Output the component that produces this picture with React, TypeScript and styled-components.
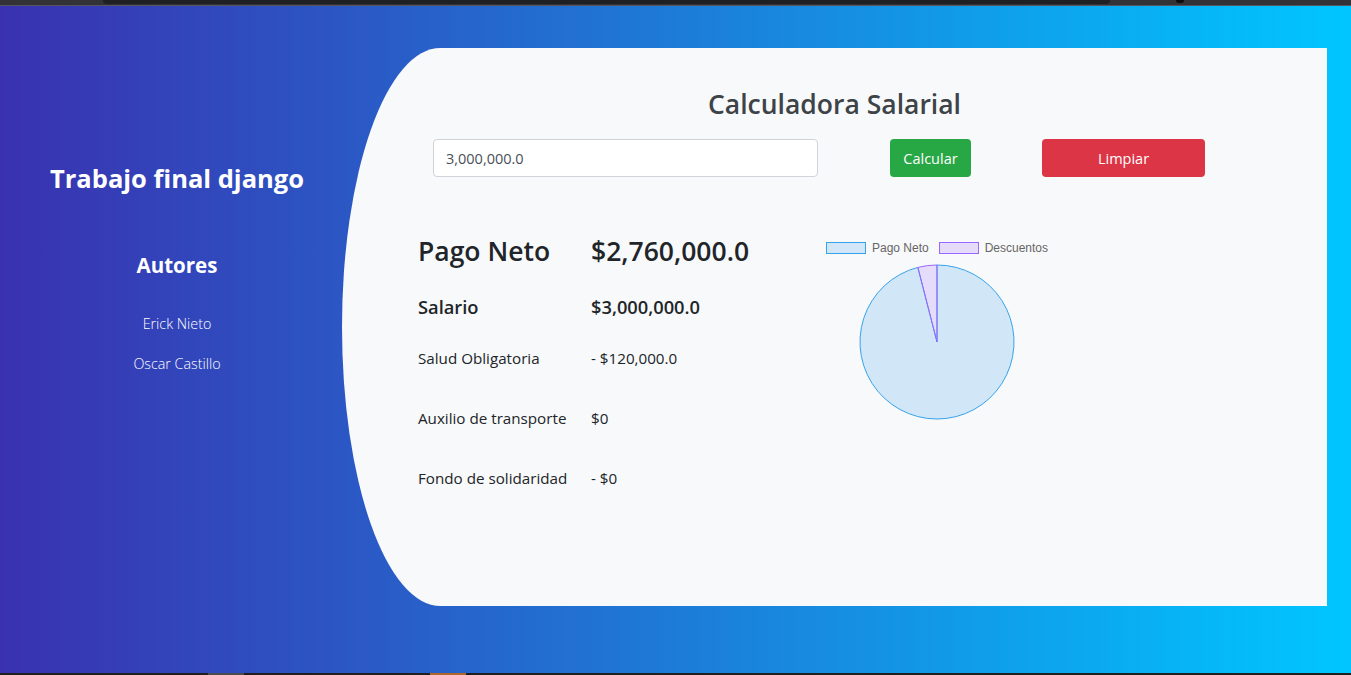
import React from "react";
import styled, { createGlobalStyle } from "styled-components";

// salary data shown in the calculator
interface deduction {
    label: string,
    value: string,
};

const salary = 3000000;
const descuentos = 120000;
const pagoNeto = salary - descuentos;

const deductions: deduction[] = [
    { label: "Salud Obligatoria", value: "- $120,000.0" },
    { label: "Auxilio de transporte", value: "$0" },
    { label: "Fondo de solidaridad", value: "- $0" },
];

const GlobalStyle = createGlobalStyle`
body {
    margin: 0;
    font-family: "Segoe UI", "Open Sans", sans-serif;
    overflow: hidden;
}
`

const Page = styled.div`
display: flex;
flex-direction: column;
width: 1351px;
height: 675px;
`

const TopStrip = styled.div`
height: 6px;
flex-shrink: 0;
display: flex;
align-items: flex-start;
padding-left: 103px;
background: #333337;
border-bottom: 1px solid #56565a;
box-sizing: border-box;
`

const TopTab = styled.div`
width: 1007px;
height: 4px;
background: #1f2023;
border-radius: 0 0 4px 4px;
`

const TopDot = styled.div`
width: 8px;
height: 3px;
margin-left: 66px;
background: #0c0c0d;
border-radius: 0 0 4px 4px;
`

const Main = styled.div`
flex: 1;
display: flex;
align-items: flex-start;
padding-top: 42px;
background: linear-gradient(to right, #3a31b0, #00c6ff);
`

const Sidebar = styled.div`
width: 342px;
padding-left: 12px;
box-sizing: border-box;
display: flex;
flex-direction: column;
align-items: center;
color: #fff;
`

const SideTitle = styled.h3`
margin: 113px 0 0;
font-size: 25.5px;
line-height: 34px;
font-weight: 700;
`

const SideSub = styled.h4`
margin: 57px 0 0;
font-size: 20.5px;
line-height: 27px;
font-weight: 700;
`

const Author = styled.p<{ $gap: number }>`
margin: ${p => p.$gap}px 0 0;
font-size: 14.3px;
line-height: 20px;
font-weight: 300;
`

const Card = styled.div`
width: 985px;
height: 558px;
box-sizing: border-box;
padding-top: 39px;
background: #f8f9fa;
border-radius: 10% 0 0 10% / 50% 0 0 50%;
display: flex;
flex-direction: column;
`

const CardTitle = styled.h2`
margin: 0;
text-align: center;
font-size: 26.5px;
line-height: 34px;
font-weight: 600;
color: #3d4347;
`

const Controls = styled.div`
display: flex;
align-items: center;
margin-top: 18px;
padding-left: 91px;
`

const AmountInput = styled.input`
width: 385px;
height: 38px;
box-sizing: border-box;
padding: 6px 12px;
border: 1px solid #ced4da;
border-radius: 4px;
background: #fff;
font-family: inherit;
font-size: 14.5px;
color: #495057;
outline: none;
`

const Button = styled.button<{ $color: string, $width: number, $gap: number }>`
width: ${p => p.$width}px;
height: 38px;
margin-left: ${p => p.$gap}px;
border: none;
border-radius: 4px;
background: ${p => p.$color};
color: #fff;
font-family: inherit;
font-size: 14.5px;
cursor: pointer;
`

const Results = styled.div`
display: flex;
margin-top: 57px;
padding-left: 76px;
`

const Table = styled.div`
display: grid;
grid-template-columns: 173px 229px;
grid-template-rows: 61px 51px 60px 60px auto;
align-items: start;
color: #212529;
`

const Big = styled.div`
font-size: 26.5px;
line-height: 34px;
font-weight: 600;
`

const Mid = styled.div`
font-size: 18.3px;
line-height: 24px;
font-weight: 600;
`

const Small = styled.div`
font-size: 15.2px;
line-height: 24px;
`

const ChartBox = styled.div`
width: 234px;
display: flex;
flex-direction: column;
align-items: center;
`

const Legend = styled.div`
display: flex;
gap: 10px;
margin-top: 8px;
height: 12px;
align-items: center;
`

const LegendItem = styled.div`
display: flex;
align-items: center;
gap: 6px;
font-family: "Liberation Sans", Arial, sans-serif;
font-size: 12px;
color: #666;
`

const Swatch = styled.span<{ $fill: string, $stroke: string }>`
width: 40px;
height: 12px;
box-sizing: border-box;
background: ${p => p.$fill};
border: 1px solid ${p => p.$stroke};
`

const Pie = styled.svg`
margin-top: 10px;
display: block;
`

const BottomStrip = styled.div`
height: 2px;
flex-shrink: 0;
display: flex;
background: #1f1f1f;
padding-left: 208px;
`

const TaskMark = styled.div<{ $color: string, $gap: number }>`
width: 36px;
margin-left: ${p => p.$gap}px;
background: ${p => p.$color};
`

const PieChart = ({ net, disc }: { net: number, disc: number }) => {
    const r = 77;
    const c = 78;
    const total = net + disc;
    const angle = -Math.PI / 2 + (net / total) * Math.PI * 2;
    const ex = c + r * Math.cos(angle);
    const ey = c + r * Math.sin(angle);
    const large = net / total > 0.5 ? 1 : 0;
    return (
        <Pie width={156} height={156} viewBox="0 0 156 156">
            <path d={`M${c},${c} L${c},${c - r} A${r},${r} 0 ${large} 1 ${ex},${ey} Z`}
                fill="rgba(54,162,235,0.2)" stroke="rgb(54,162,235)" strokeWidth={1} />
            <path d={`M${c},${c} L${ex},${ey} A${r},${r} 0 ${1 - large} 1 ${c},${c - r} Z`}
                fill="rgba(153,102,255,0.2)" stroke="rgb(153,102,255)" strokeWidth={1} />
        </Pie>
    );
};

const App = () => {
    return (
        <Page>
            <GlobalStyle />
            <TopStrip>
                <TopTab />
                <TopDot />
            </TopStrip>
            <Main>
                <Sidebar>
                    <SideTitle>Trabajo final django</SideTitle>
                    <SideSub>Autores</SideSub>
                    <Author $gap={35}>Erick Nieto</Author>
                    <Author $gap={20}>Oscar Castillo</Author>
                </Sidebar>
                <Card>
                    <CardTitle>Calculadora Salarial</CardTitle>
                    <Controls>
                        <AmountInput defaultValue="3,000,000.0" />
                        <Button $color="#28a745" $width={81} $gap={72}>Calcular</Button>
                        <Button $color="#dc3545" $width={163} $gap={71}>Limpiar</Button>
                    </Controls>
                    <Results>
                        <Table>
                            <Big>Pago Neto</Big>
                            <Big>$2,760,000.0</Big>
                            <Mid>Salario</Mid>
                            <Mid>$3,000,000.0</Mid>
                            {deductions.map(d => (
                                <React.Fragment key={d.label}>
                                    <Small>{d.label}</Small>
                                    <Small>{d.value}</Small>
                                </React.Fragment>
                            ))}
                        </Table>
                        <ChartBox>
                            <Legend>
                                <LegendItem>
                                    <Swatch $fill="rgba(54,162,235,0.2)" $stroke="rgb(54,162,235)" />
                                    Pago Neto
                                </LegendItem>
                                <LegendItem>
                                    <Swatch $fill="rgba(153,102,255,0.2)" $stroke="rgb(153,102,255)" />
                                    Descuentos
                                </LegendItem>
                            </Legend>
                            <PieChart net={pagoNeto} disc={descuentos} />
                        </ChartBox>
                    </Results>
                </Card>
            </Main>
            <BottomStrip>
                <TaskMark $color="#4a4d4f" $gap={0} />
                <TaskMark $color="#b0672c" $gap={186} />
            </BottomStrip>
        </Page>
    );
};

export default App;
